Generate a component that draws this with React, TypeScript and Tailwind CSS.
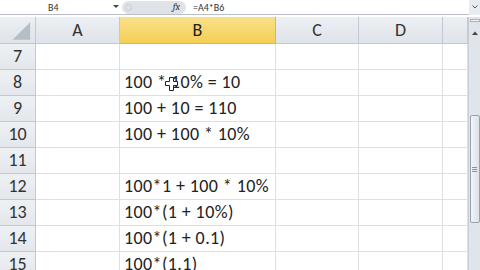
import React from "react";

const cols = [
  { name: "", w: 36 },
  { name: "A", w: 84 },
  { name: "B", w: 156 },
  { name: "C", w: 83 },
  { name: "D", w: 84 },
  { name: "", w: 25 },
];

const rows: { n: number; b: string }[] = [
  { n: 7, b: "" },
  { n: 8, b: "100 * 10% = 10" },
  { n: 9, b: "100 + 10 = 110" },
  { n: 10, b: "100 + 100 * 10%" },
  { n: 11, b: "" },
  { n: 12, b: "100*1 + 100 * 10%" },
  { n: 13, b: "100*(1 + 10%)" },
  { n: 14, b: "100*(1 + 0.1)" },
  { n: 15, b: "100*(1.1)" },
];

const font = { fontFamily: "Carlito, 'Open Sans', 'Liberation Sans', sans-serif" };

export default function App() {
  return (
    <div className="w-[480px] h-[270px] overflow-hidden bg-white relative" style={font}>
      {/* formula bar */}
      <div className="h-[15px] flex items-center border-b border-[#b9bec6] bg-white text-[10px] text-[#333]">
        <div className="w-[110px] pl-[48px]">B4</div>
        <div className="w-[12px] flex justify-center">
          <svg width="6" height="4" viewBox="0 0 6 4"><path d="M0 0h6L3 3z" fill="#444" /></svg>
        </div>
        <div className="w-[64px] h-[13px] rounded-full bg-[#dfe3e8] flex items-center justify-between px-[3px]">
          <div className="w-[7px] h-[7px] rounded-full border border-[#c5cad0]" />
          <span className="italic font-serif text-[10px] text-[#333] pr-[3px]">fx</span>
        </div>
        <div className="pl-[7px] flex-1">=A4*B6</div>
        <div className="w-[11px] h-[15px] bg-[#e8ecf0] flex items-center justify-center">
          <svg width="6" height="4" viewBox="0 0 6 4"><path d="M0.5 0.5L3 3L5.5 0.5" stroke="#555" fill="none" /></svg>
        </div>
      </div>
      <div className="h-[2px] bg-white" />
      <div className="flex">
        <div className="flex flex-col">
          {/* header */}
          <div className="flex h-[27px]">
            {cols.map((c, i) => (
              <div
                key={i}
                style={{ width: c.w }}
                className={
                  "h-[27px] border-r border-b flex items-center justify-center text-[18px] " +
                  (c.name === "B"
                    ? "bg-gradient-to-b from-[#f9e08a] to-[#f5cf52] border-[#e0b84a] text-[#222]"
                    : "bg-gradient-to-b from-[#eceff3] to-[#dfe4ea] border-[#c3c9d1] text-[#333]")
                }
              >
                {i === 0 ? (
                  <svg width="36" height="27" viewBox="0 0 36 27">
                    <path d="M31 5V23H13z" fill="#b7bdc5" />
                  </svg>
                ) : (
                  c.name
                )}
              </div>
            ))}
          </div>
          {rows.map((r) => (
            <div key={r.n} className="flex h-[26px]">
              {cols.map((c, i) => (
                <div
                  key={i}
                  style={{ width: c.w }}
                  className={
                    "h-[26px] border-r border-b flex items-center text-[18px] " +
                    (i === 0
                      ? "bg-gradient-to-b from-[#eef1f4] to-[#e3e7ec] border-[#c3c9d1] justify-center text-[#333]"
                      : "border-[#dcdfe3] text-[#222] pl-[4px] whitespace-nowrap overflow-visible tracking-[0.4px]")
                  }
                >
                  {i === 0 ? r.n : i === 2 ? <span className="relative z-10">{r.b}</span> : null}
                </div>
              ))}
            </div>
          ))}
        </div>
        {/* scrollbar */}
        <div className="w-[12px] h-[260px] bg-[#dfe5eb] border-l border-[#c8ced6] flex flex-col items-center">
          <div className="w-[10px] h-[3px] mt-[2px] border border-[#a9b0b9] bg-[#f3f5f7]" />
          <div className="h-[10px] flex items-center justify-center mt-[6px]">
            <svg width="6" height="4" viewBox="0 0 6 4"><path d="M0 4L3 0.5L6 4z" fill="#444" /></svg>
          </div>
          <div className="mt-[77px] w-[10px] h-[108px] rounded-[2px] border border-[#9aa3ad] bg-gradient-to-r from-[#f2f4f6] to-[#dde2e8] flex flex-col items-center justify-center gap-[1px]">
            <div className="w-[5px] h-[1px] bg-[#8a939d]" />
            <div className="w-[5px] h-[1px] bg-[#8a939d]" />
            <div className="w-[5px] h-[1px] bg-[#8a939d]" />
          </div>
        </div>
      </div>
      {/* mouse cursor */}
      <svg className="absolute left-[165px] top-[77px] z-20" width="13" height="14" viewBox="0 0 13 14">
        <path d="M4.5 0.5h4v4h4v4h-4v5h-4v-5h-4v-4h4z" fill="#fff" stroke="#222" />
      </svg>
    </div>
  );
}
